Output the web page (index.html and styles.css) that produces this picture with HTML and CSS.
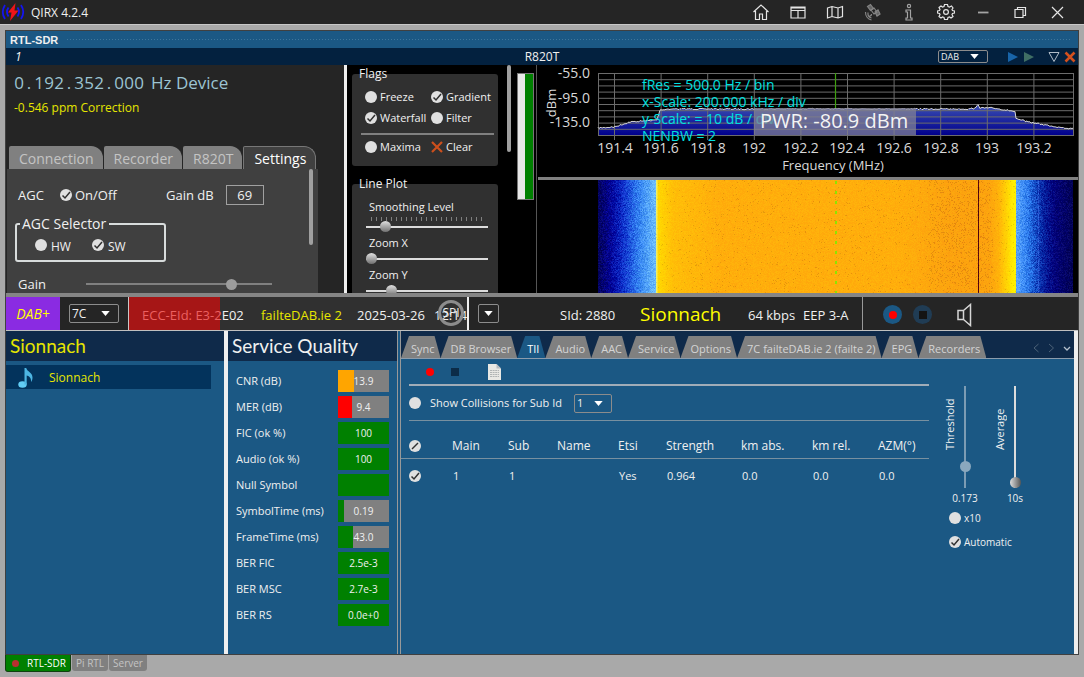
FILE: index.html
```html
<!DOCTYPE html>
<html lang="en">
<head>
<meta charset="utf-8">
<title>QIRX 4.2.4</title>
<link rel="stylesheet" href="styles.css">
</head>
<body>
<header class="titlebar">
  <svg class="logo" width="24" height="18" viewBox="0 0 24 18"><g fill="none" stroke="#1414f0" stroke-width="1.8"><path d="M4 2Q-.5 9 4 16M7.500 4.500Q4.500 9 7.500 13.500M20 2q4.500 7 0 14M16.500 4.500q3 4.500 0 9"/></g><path d="M14.500 0 7 9.500h3.500L9 18l8.500-10.500h-4z" fill="#f01418"/></svg>
  <h1>QIRX 4.2.4</h1>
  <nav class="window-buttons">
    <button aria-label="Home"><svg viewBox="0 0 18 18"><path d="M1.500 9 9 2l7.500 7M3.500 8v8.500h4V11h3v5.500h4V8"/></svg></button>
    <button aria-label="Layout"><svg viewBox="0 0 18 18"><path d="M2 4h14v11H2zM2 7.500h14M9 7.500V15M2 5h14"/></svg></button>
    <button aria-label="Map"><svg viewBox="0 0 18 18"><path d="M1.500 5 6 3.500 12 5l4.500-1.500v10L12 15l-6-1.500L1.500 15zM6 3.500v10M12 5v10"/></svg></button>
    <button class="dim" aria-label="Satellite"><svg viewBox="0 0 18 18"><path d="m4.500 3.500 3-2 3 4-3 2zM12 9l3-2 2 4-3 2z" fill="#666"/><path d="m8 7 3-2 3 4-3 2zM8.500 11a2 2 0 0 1-2 2M5 9.500a5 5 0 0 0 3.500 5.500M2.500 9a8 8 0 0 0 6 8"/></svg></button>
    <button class="soft" aria-label="Information"><svg viewBox="0 0 18 18"><circle cx="9" cy="3" r="1.600"/><path d="M6 7h4.500v8H12v2H6v-2h1.500V9H6z"/></svg></button>
    <button aria-label="Settings"><svg viewBox="0 0 18 18"><path d="M7.500 1.500h3l.5 2 1.500.5 2-1 1.500 2-1 1.500.5 1 2 .5v2l-2 .5-.5 1 1 2-2 1.500-1.500-1-1.500.5-.5 2h-3l-.5-2-1.500-.5-1.500 1-2-1.500 1-2-.5-1-2-.5V8l2-.5.500-1-1-2L4 3l1.500 1L7 3.500z"/><circle cx="9" cy="9" r="2.400"/></svg></button>
    <button class="soft" aria-label="Minimize"><svg viewBox="0 0 18 18"><path d="M4 9.500h10.500" stroke-width="1.800"/></svg></button>
    <button aria-label="Restore"><svg viewBox="0 0 18 18"><path d="M4 6.500h8v8H4zM6.500 6.500v-2h8v8H12"/></svg></button>
    <button aria-label="Close"><svg viewBox="0 0 18 18"><path d="m4 4 11 11M15 4 4 15"/></svg></button>
  </nav>
</header>

<main class="frame">
  <div class="caption"><h2>RTL-SDR</h2><span class="grip"></span></div>
  <div class="device-bar">
    <span class="device-no">1</span><strong>R820T</strong>
    <div class="device-tools">
      <select class="select-small" aria-label="Mode"><option>DAB</option></select>
      <button aria-label="Start"><svg width="14" height="12" viewBox="0 0 14 12"><path d="M2 1l10 5-10 5z" fill="#1864a8"/></svg></button>
      <button aria-label="Play"><svg width="14" height="12" viewBox="0 0 14 12"><path d="M2 1l10 5-10 5z" fill="#3f6e64"/></svg></button>
      <button class="gap-left" aria-label="Menu"><svg width="12" height="12" viewBox="0 0 12 12"><path d="M1 1.500h10L6 10.500z" fill="none" stroke="#b0bcc8"/></svg></button>
      <button aria-label="Close device"><svg width="12" height="12" viewBox="0 0 12 12"><path d="m1.500 1.500 9 9M10.500 1.500l-9 9" stroke="#d2501e" stroke-width="2.600"/></svg></button>
    </div>
  </div>

  <div class="upper">
    <section class="tuner">
      <p class="frequency"><span class="digits"><i>0</i><i>.</i><i>1</i><i>9</i><i>2</i><i>.</i><i>3</i><i>5</i><i>2</i><i>.</i><i>0</i><i>0</i><i>0</i></span><span>Hz Device</span></p>
      <p class="correction">-0.546 ppm Correction</p>
      <div class="tuner-tabs"><button>Connection</button><button>Recorder</button><button>R820T</button><button class="active">Settings</button></div>
      <div class="settings">
        <div class="agc-row"><span class="agc">AGC</span><label class="agc-switch"><input type="checkbox" checked>On/Off</label><label class="gain-db">Gain dB<input type="text" value="69"></label></div>
        <fieldset class="selector"><legend>AGC Selector</legend><label><input type="radio" name="agc">HW</label><label><input type="radio" name="agc" checked>SW</label></fieldset>
        <label class="gain-row">Gain<input type="range" min="0" max="100" value="80"></label>
        <span class="scroll"></span>
      </div>
    </section>

    <section class="controls">
      <div class="groups">
        <fieldset class="group flags"><legend>Flags</legend>
          <div class="flag-grid">
            <label><input type="checkbox">Freeze</label><label><input type="checkbox" checked>Gradient</label>
            <label><input type="checkbox" checked>Waterfall</label><label><input type="checkbox">Filter</label>
          </div>
          <div class="flag-grid last">
            <label><input type="checkbox">Maxima</label>
            <button><svg width="12" height="12" viewBox="0 0 12 12"><path d="m1 1 10 10M11 1 1 11" stroke="#cc4f1c" stroke-width="2.200"/></svg>Clear</button>
          </div>
        </fieldset>
        <fieldset class="group lines"><legend>Line Plot</legend>
          <label for="smooth">Smoothing Level</label><span class="ticks"></span><input id="smooth" type="range" min="0" max="100" value="13">
          <label for="zx">Zoom X</label><input id="zx" type="range" min="0" max="100" value="0">
          <label for="zy">Zoom Y</label><input id="zy" type="range" min="0" max="100" value="18">
        </fieldset>
      </div>
      <span class="scroll"></span>
      <div class="meter"></div>
    </section>

    <section class="plots">
      <svg class="spectrum" viewBox="0 0 540 112">
        <defs><linearGradient id="fill" x1="0" y1="0" x2="0" y2="1"><stop offset="0" stop-color="#3c50b4"/><stop offset="1" stop-color="#00008c"/></linearGradient></defs>
        <path id="area" fill="url(#fill)"/>
        <g id="grid" stroke="#6c6c6c"></g>
        <path id="trace" fill="none" stroke="#d8d8d8"/>
        <path d="M297.500 8v35" stroke="#3fa010" stroke-width="1.200"/>
        <g class="info"><text x="104" y="25">fRes = 500.0 Hz / bin</text><text x="104" y="42">x-Scale: 200.000 kHz / div</text><text x="104" y="59">y-Scale: = 10 dB / div</text><text x="104" y="76">NENBW = 2</text></g>
        <rect x="216" y="43" width="162" height="27" fill="#808094" fill-opacity=".75"/>
        <text class="power" x="222" y="63">PWR: -80.9 dBm</text>
        <g class="axis end"><text x="52" y="13">-55.0</text><text x="52" y="38">-95.0</text><text x="52" y="62">-135.0</text></g>
        <g class="axis mid"><text x="77" y="88">191.4</text><text x="123" y="88">191.6</text><text x="170" y="88">191.8</text><text x="216" y="88">192</text><text x="263" y="88">192.2</text><text x="309" y="88">192.4</text><text x="356" y="88">192.6</text><text x="403" y="88">192.8</text><text x="449" y="88">193</text><text x="496" y="88">193.2</text><text class="axis-title" x="295" y="105">Frequency (MHz)</text><text class="axis-title" transform="translate(18 38) rotate(-90)">dBm</text></g>
      </svg>
      <div class="waterfall"><canvas id="waterfall" width="475" height="113"></canvas></div>
    </section>
  </div>

  <div class="status">
    <strong class="dab">DAB+</strong>
    <div class="channel"><select aria-label="Channel"><option>7C</option></select></div>
    <div class="ensemble"><span class="level"></span><span class="ecc"><b>ECC-EId: E3-2</b>E02</span><span class="name">failteDAB.ie 2</span><span class="date">2025-03-26</span><span class="time">12:14</span><button class="spi">SPI</button></div>
    <div class="service">
      <button class="drop" aria-label="Services"></button><span class="sid">SId: 2880</span><strong>Sionnach</strong><span class="rate">64 kbps</span><span>EEP 3-A</span>
    </div>
    <div class="transport">
      <button class="round" aria-label="Record"><i class="dot"></i></button><button class="round off" aria-label="Stop"><i class="square"></i></button>
      <button class="speaker" aria-label="Sound"><svg width="18" height="24" viewBox="0 0 18 24"><path d="M2 7.500h5.500v9H2zM7.500 7.500l7-6v21l-7-6" fill="none" stroke="#d6d6d6" stroke-width="1.500"/></svg></button>
    </div>
  </div>

  <div class="lower">
    <section class="stations"><h3>Sionnach</h3>
      <button class="station"><svg width="18" height="22" viewBox="0 0 18 22"><ellipse cx="5.500" cy="17.500" rx="4.200" ry="3.300" fill="#62cdf5"/><path d="M7.500 1h1.700c1 4 6.300 4 6.300 9.500 0 2-.7 3.500-1.500 4.500.6-4.500-2.500-6-4.300-6.500v9H7.500z" fill="#4db5e2"/></svg>Sionnach</button>
    </section>
    <section class="quality"><h3>Service Quality</h3>
      <dl>
        <dt>CNR (dB)</dt><dd><i class="amber" style="width:32%"></i><span>13.9</span></dd>
        <dt>MER (dB)</dt><dd><i class="red" style="width:27%"></i><span>9.4</span></dd>
        <dt>FIC (ok %)</dt><dd><i style="width:100%"></i><span>100</span></dd>
        <dt>Audio (ok %)</dt><dd><i style="width:100%"></i><span>100</span></dd>
        <dt>Null Symbol</dt><dd><i style="width:100%"></i></dd>
        <dt>SymbolTime (ms)</dt><dd><i style="width:12%"></i><span>0.19</span></dd>
        <dt>FrameTime (ms)</dt><dd><i style="width:29%"></i><span>43.0</span></dd>
        <dt>BER FIC</dt><dd><i style="width:100%"></i><span>2.5e-3</span></dd>
        <dt>BER MSC</dt><dd><i style="width:100%"></i><span>2.7e-3</span></dd>
        <dt>BER RS</dt><dd><i style="width:100%"></i><span>0.0e+0</span></dd>
      </dl>
    </section>
    <section class="details">
      <div class="detail-tabs"><button>Sync</button><button>DB Browser</button><button class="active">TII</button><button>Audio</button><button>AAC</button><button>Service</button><button>Options</button><button>7C failteDAB.ie 2 (failte 2)</button><button>EPG</button><button>Recorders</button>
        <svg class="arrows" width="38" height="12" viewBox="0 0 38 12" fill="none"><path d="M5.500 2 1 6l4.500 4M16 2l4.500 4-4.500 4" stroke="#4c6278"/><path d="m31 5 3 3 3-3" stroke="#b4c0cc" stroke-width="1.300"/></svg>
      </div>
      <div class="tii">
        <div class="tii-main">
          <div class="tools"><button aria-label="Record TII"><i class="dot"></i></button><button aria-label="Stop TII"><i class="square"></i></button><button class="page" aria-label="Log"><svg width="13" height="16" viewBox="0 0 13 16"><path d="M0 0h8.500L13 4.500V16H0z" fill="#e8e8e4"/><path d="M8.500 0v4.500H13z" fill="#b8bcc0"/><path d="M2 6.500h9M2 8.500h9M2 10.500h9M2 12.500h9" stroke="#b0b4b4" stroke-dasharray="2 .6"/></svg></button></div>
          <div class="collisions"><label><input type="checkbox">Show Collisions for Sub Id</label><select aria-label="Sub Id"><option>1</option></select></div>
          <table>
            <colgroup><col class="c1"><col class="c2"><col class="c3"><col class="c4"><col class="c5"><col class="c6"><col class="c7"><col class="c8"><col></colgroup>
            <thead><tr><th><input type="checkbox" class="partial" aria-label="All rows"></th><th>Main</th><th>Sub</th><th>Name</th><th>Etsi</th><th>Strength</th><th>km abs.</th><th>km rel.</th><th>AZM(°)</th></tr></thead>
            <tbody><tr><td><input type="checkbox" checked aria-label="Row 1"></td><td>1</td><td>1</td><td></td><td>Yes</td><td>0.964</td><td>0.0</td><td>0.0</td><td>0.0</td></tr></tbody>
          </table>
        </div>
        <div class="tii-side">
          <div class="sliders">
            <label for="thr">Threshold</label><div class="slider muted"><input id="thr" type="range" min="0" max="100" value="18" disabled><output>0.173</output></div>
            <label for="avg">Average</label><div class="slider"><input id="avg" type="range" min="0" max="100" value="0"><output>10s</output></div>
          </div>
          <label class="check"><input type="checkbox">x10</label>
          <label class="check"><input type="checkbox" checked>Automatic</label>
        </div>
      </div>
    </section>
  </div>
</main>
<footer class="devices"><button class="active"><i class="dot"></i>RTL-SDR</button><button>Pi RTL</button><button>Server</button></footer>
<script src="plots.js"></script>
</body>
</html>
```
FILE: styles.css
```css
* { box-sizing: border-box; }
body { margin: 0; min-height: 100vh; display: flex; flex-direction: column; background: #a9a9a9; color: #f0f0f0; font: 12px/16px "Open Sans", "Noto Sans", sans-serif; }
h1, h2, h3, p, dl, dd, fieldset { margin: 0; padding: 0; border: 0; font-weight: 400; }
button, input, select { font: inherit; color: inherit; margin: 0; }
button { padding: 0; border: 0; background: none; white-space: nowrap; }
i { font-style: normal; }
fieldset { min-width: 0; }
label { white-space: nowrap; }

input[type=checkbox], input[type=radio] { appearance: none; flex: none; width: 12px; height: 12px; border-radius: 50%; background: #e0e0e0 center / 12px 12px no-repeat; }
input:checked { background-image: url("data:image/svg+xml,%3Csvg xmlns='http://www.w3.org/2000/svg' viewBox='0 0 12 12'%3E%3Cpath d='M2.500 6.500l2.500 2.500 5-6' fill='none' stroke='%23303030' stroke-width='1.500'/%3E%3C/svg%3E") !important; }
input.partial { background-image: url("data:image/svg+xml,%3Csvg xmlns='http://www.w3.org/2000/svg' viewBox='0 0 12 12'%3E%3Cpath d='M3 9l6-6' stroke='%23303030' stroke-width='1.500'/%3E%3C/svg%3E") !important; }
input[type=range] { appearance: none; display: block; width: 100%; height: 12px; background: linear-gradient(#dcdcdc, #dcdcdc) center / 100% 2px no-repeat; }
input[type=range]::-webkit-slider-thumb { appearance: none; width: 11px; height: 11px; border-radius: 50%; background: linear-gradient(#e0e0e0, #707070); }
select { appearance: none; width: 50px; height: 19px; padding: 0 2px; border: 1px solid #8c8c8c; border-radius: 2px; background: url("data:image/svg+xml,%3Csvg xmlns='http://www.w3.org/2000/svg' viewBox='0 0 10 6'%3E%3Cpath d='M0 0h10L5 6z' fill='white'/%3E%3C/svg%3E") right 8px center / 9px 5px no-repeat; }
.dot { display: block; width: 8px; height: 8px; border-radius: 50%; background: #f00; }
.square { display: block; width: 8px; height: 8px; background: #0c2c48; }
.scroll { width: 4px; border-radius: 2px; background: #a0a0a0; }

.titlebar { display: flex; align-items: center; height: 25px; flex: none; padding-right: 9px; background: #252525; border-bottom: 1px solid #c8c8c8; }
.logo { margin-left: 1px; }
h1 { flex: 1; margin-left: 6px; padding-top: 2px; font-size: 12px; }
.window-buttons { display: flex; }
.window-buttons button { width: 37px; height: 18px; }
.window-buttons svg { width: 18px; height: 18px; fill: none; stroke: #e4e4e4; stroke-width: 1.200; }
.window-buttons .dim svg, .window-buttons .soft svg { stroke: #858585; }
.window-buttons .soft svg { stroke: #a4a4a4; }

.frame { flex: 1; display: flex; flex-direction: column; margin: 5px 5px 0; border: 1px solid #404040; }
.caption { display: flex; align-items: center; height: 17px; padding: 0 8px 0 4px; background: #1b5884; }
h2 { font: bold 11px/16px "Liberation Sans", Arial, sans-serif; }
.grip { flex: 1; height: 4px; margin-left: 8px; background: radial-gradient(circle, #5688aa 0 1px, transparent 1px) 0 0 / 3px 3px; opacity: .6; }
.device-bar { display: grid; grid-template-columns: 1fr auto 1fr; align-items: center; height: 17px; padding: 0 2px; background: #03213f; }
.device-no { padding-left: 7px; font-style: italic; }
.device-bar strong { font-weight: 400; }
.device-tools { display: flex; justify-content: flex-end; align-items: center; }
.device-tools button, .device-tools svg { display: block; }
.device-tools select { height: 13px; margin-right: 16px; font-size: 9px; line-height: 11px; }
.device-tools button { margin-left: 2px; }
.device-tools .gap-left { margin-left: 12px; margin-right: 2px; }

.upper { flex: 229 1 0; min-height: 228px; display: flex; background: #000; border-bottom: 4px solid #858585; overflow: hidden; max-height: 232px; }
.tuner { flex: 0 1 341px; display: flex; flex-direction: column; background: #252525; border-right: 3px solid #efefef; overflow: hidden; }
.frequency { display: flex; gap: 7px; padding: 7px 0 0 8px; font-size: 17px; line-height: 22px; color: #9cc4d2; }
.digits i { display: inline-block; width: 10px; text-align: center; }
.correction { margin: 6px 8px 30px; color: #e6e600; line-height: 16px; }
.tuner-tabs { display: flex; gap: 1px; margin-left: 3px; font-size: 14px; }
.tuner-tabs button { height: 23px; padding: 3px 9px 0 10px; background: #808080; color: #c4c4c4; border-radius: 2px 12px 0 0; }
.tuner-tabs .active { background: #404040; color: #fff; border: 1px solid #777; border-bottom: 0; padding-top: 2px; }
.settings { position: relative; width: 311px; flex: 1; padding: 16px 8px 0; background: #404040; margin-left: 1px; }
.settings .scroll { position: absolute; right: 5px; top: 0; height: 76px; }
.agc-row { display: flex; align-items: center; height: 20px; padding-left: 3px; font-size: 13px; }
.agc { width: 42px; }
.agc-switch { display: flex; align-items: center; gap: 3px; width: 106px; }
.gain-db { display: flex; align-items: center; gap: 12px; }
.gain-db input { width: 38px; height: 20px; border: 1px solid #a0a0a0; background: none; text-align: center; }
.selector { display: flex; align-items: center; gap: 21px; width: 151px; height: 48px; margin-top: 9px; padding: 0 0 0 18px; border: 2px solid #d8dcdc; border-radius: 3px; }
.selector legend { margin-left: -15px; padding: 0 3px 0 2px; font-size: 14px; line-height: 20px; }
.selector label { display: flex; align-items: flex-start; gap: 4px; line-height: 16px; }
.gain-row { display: flex; align-items: center; gap: 40px; margin-top: 12px; padding-left: 3px; font-size: 13px; line-height: 20px; }
.gain-row input { width: 186px; background-image: linear-gradient(#808080, #808080); }
.gain-row input::-webkit-slider-thumb { background: #9c9c9c; }

.controls { flex: none; display: flex; width: 190px; padding-left: 5px; border-right: 1px solid #555; font-size: 11px; }
.groups { width: 146px; }
.controls > .scroll { height: 87px; margin-left: 9px; }
.meter { width: 17px; height: 127px; margin: 8px 0 0 6px; background: linear-gradient(90deg, #e8e8e8 50%, #008000 50%); border: 1px solid #777; }
.group { margin-top: 1px; padding: 0 4px 11px 9px; background: #303030; border-radius: 3px; }
.group legend { padding: 0; margin-left: -2px; font-size: 12px; line-height: 16px; }
.flag-grid { display: grid; grid-template-columns: 66px 1fr; row-gap: 5px; margin-top: 7px; padding: 0 0 7px 4px; border-bottom: 2px solid #808080; }
.flag-grid label, .flag-grid button { display: flex; align-items: center; gap: 3px; }
.flag-grid.last { margin-top: 4px; padding-bottom: 0; border: 0; }
.lines { display: flex; flex-direction: column; margin-top: 10px; padding: 0 10px 0 14px; }
.lines legend { margin-left: -7px; }
.lines label { margin: 3px 0 2px 3px; }
.lines label:first-of-type { margin: 7px 0 2px 3px; }
.lines input { height: 11px; }
.ticks { height: 4px; margin: 0 4px 0 5px; background: repeating-linear-gradient(90deg, #808080 0 1px, transparent 1px 5px); }

.plots { flex: 1; min-width: 0; display: flex; flex-direction: column; padding-left: 1px; }
.spectrum { display: block; width: 100%; flex: none; border-bottom: 3px solid #808080; height: 115px; }
.spectrum text { font-family: "Open Sans", "Noto Sans", sans-serif; }
.info { fill: #00e0e0; font-size: 14px; }
.power { fill: #f4f4f4; font-size: 20px; }
.axis { fill: #d8d8d8; font-size: 14px; }
.axis-title { font-size: 13px; }
.end { text-anchor: end; }
.mid { text-anchor: middle; }
.waterfall { flex: 1; min-height: 0; padding: 0 5px 0 60px; }
.waterfall canvas { display: block; width: 100%; height: 100%; }

.status { display: flex; height: 34px; flex: none; background: #252525; border-bottom: 1px solid #c0c0c0; font-size: 13px; }
.dab { display: grid; place-items: center; width: 54px; background: #8a2be2; color: #ff0; font-style: italic; font-weight: 400; font-size: 14px; }
.channel { display: flex; align-items: center; justify-content: center; width: 69px; border-right: 1px solid #c8c8c8; }
.channel select { font-size: 12px; }
.ensemble { position: relative; display: flex; align-items: center; width: 340px; padding: 2px 0 0 13px; background: #303030; border-right: 2px solid #eee; overflow: hidden; white-space: nowrap; }
.level { position: absolute; inset: 0 auto 0 0; width: 91px; background: #a61616; }
.ecc { position: relative; flex: none; width: 119px; }
.ecc b { font-weight: 400; color: #ec6060; }
.name { flex: none; width: 96px; color: #e6e600; }
.date { flex: none; width: 77px; }
.spi { position: absolute; left: 309px; top: 3px; width: 26px; height: 26px; border: 3px solid #8c8c8c; border-radius: 50%; color: #eee; font-size: 12px; line-height: 20px; }
.service { flex: 1; display: flex; align-items: center; min-width: 390px; padding-left: 9px; border-right: 1px solid #999; white-space: nowrap; }
.service > span { padding-top: 3px; }
.drop { width: 21px; height: 19px; margin-right: 61px; border: 1px solid #8c8c8c; border-radius: 2px; background: url("data:image/svg+xml,%3Csvg xmlns='http://www.w3.org/2000/svg' viewBox='0 0 10 6'%3E%3Cpath d='M0 0h10L5 6z' fill='white'/%3E%3C/svg%3E") center / 9px 5px no-repeat; }
.sid { width: 80px; }
.service strong { width: 108px; font-size: 19px; line-height: 24px; font-weight: 400; color: #ff0; }
.rate { width: 55px; }
.transport { display: flex; align-items: center; gap: 11px; width: 215px; padding: 2px 0 0 20px; }
.round { display: grid; place-items: center; width: 19px; height: 19px; border-radius: 50%; background: #1b5884; }
.off { background: #203c54; }
.off .square { background: #141414; }
.speaker { margin-left: 13px; height: 24px; }

.lower { flex: 324 1 0; display: flex; background: #1b5884; border-right: 4px solid #efefef; }
h3 { height: 30px; padding-left: 4px; background: #0f2a4a; font: 19px/30px Lato, "Open Sans", sans-serif; }
.stations { flex: 0 1 222px; border-right: 4px solid #efefef; }
.stations h3 { color: #e6e600; }
.station { display: flex; align-items: center; gap: 14px; width: calc(100% - 13px); height: 24px; margin-top: 4px; padding: 2px 0 0 11px; background: #03335c; color: #e6e600; font-size: 12px; }
.quality { flex: none; width: 173px; border-right: 4px double #999; }
.quality dl { display: grid; grid-template-columns: 1fr 51px; gap: 4px 0; padding: 9px 8px 0; font-size: 11px; line-height: 22px; }
.quality dd { position: relative; background: #808080; text-align: center; font-size: 10px; }
.quality dd i { position: absolute; inset: 0 auto 0 0; background: #008000; }
.quality dd span { position: relative; }
.quality dd .amber { background: #ffa500; }
.quality dd .red { background: #f00; }
.details { flex: 1; min-width: 0; display: flex; flex-direction: column; }
.detail-tabs { display: flex; align-items: flex-end; height: 28px; padding-right: 3px; background: #0f2a4a; border-bottom: 1px solid #8c9cac; }
.detail-tabs button { height: 22px; padding: 4px 6px 0 10px; background: #808080; color: #d4d4d4; font-size: 11px; line-height: 18px; clip-path: polygon(8px 0, calc(100% - 6px) 0, 100% 100%, 0 100%); }
.detail-tabs .active { background: #1b5884; color: #fff; }
.arrows { flex: none; margin: 0 0 4px auto; }
.tii { flex: 1; display: flex; }
.tii-main { flex: 1; min-width: 0; }
.tools { display: flex; align-items: center; gap: 17px; height: 27px; margin-left: 8px; padding-left: 17px; border-bottom: 2px solid #a0acb8; }
.tools .page { height: 16px; margin-left: 12px; }
.collisions { display: flex; align-items: center; gap: 12px; height: 35px; margin-left: 8px; border-bottom: 1px solid #7890a0; font-size: 11px; }
.collisions label { display: flex; align-items: center; gap: 9px; }
.collisions select { width: 38px; }
table { width: 100%; table-layout: fixed; border-collapse: collapse; text-align: left; }
th, td { height: 37px; padding: 14px 0 0; font-weight: 400; font-size: 12px; border-bottom: 1px solid #7890a0; }
td { height: 35px; padding: 0 0 0 1px; border: 0; font-size: 11px; }
th:first-child, td:first-child { padding-left: 8px; }
th input, td input { display: block; }
.c1 { width: 51px; } .c2 { width: 56px; } .c3 { width: 49px; } .c4 { width: 61px; } .c5 { width: 48px; } .c6 { width: 75px; } .c7 { width: 71px; } .c8 { width: 66px; }
.tii-side { flex: none; width: 145px; padding: 27px 0 0 14px; font-size: 10px; }
.sliders { display: flex; height: 124px; }
.sliders > label { width: 14px; height: 64px; writing-mode: vertical-rl; transform: rotate(180deg); font-size: 11px; line-height: 14px; }
.slider { display: flex; flex-direction: column; align-items: center; width: 36px; margin-left: -10px; margin-right: 10px; }
.slider input { writing-mode: vertical-lr; direction: rtl; width: 12px; height: 102px; margin: 0 0 2px; background-size: 2px 100%; }
.slider input::-webkit-slider-thumb { background: linear-gradient(90deg, #ddd, #555); }
.muted input { background-image: linear-gradient(#7c9cb4, #7c9cb4); }
.muted input::-webkit-slider-thumb { background: #8aa8be; }
.check { display: flex; align-items: center; gap: 3px; margin: 0 0 8px 6px; }

.devices { display: flex; align-items: flex-start; gap: 1px; height: 22px; flex: none; padding-left: 5px; font-size: 10px; }
.devices button { display: flex; align-items: center; height: 16px; padding: 0 4px; background: #808080; color: #c4c4c4; border-radius: 0 0 3px 3px; }
.devices .active { gap: 8px; height: 17px; padding: 0 4px 0 6px; background: #008000; color: #fff; border: 1px solid #104010; border-top: 0; }
.devices .dot { width: 7px; height: 7px; background: #b83030; }
```
FILE: plots.js
```js
let seed = 7;
const rnd = () => (seed = (seed * 16807) % 2147483647) / 2147483647;

// Interpolates linearly through [x, value...] stops.
function sample(stops, x) {
  for (let i = 1; i < stops.length; i++) {
    const a = stops[i - 1], b = stops[i];
    if (x <= b[0]) return a.slice(1).map((v, k) => v + (b[k + 1] - v) * (x - a[0]) / (b[0] - a[0]));
  }
  return stops[stops.length - 1].slice(1);
}

const level = [[60, 63], [76, 62], [92, 57], [119, 55], [122, 45], [130, 44], [430, 44], [438, 43], [440, 39], [442, 43], [455, 43], [474, 46], [477, 47], [478, 54], [496, 58], [520, 62], [535, 64]];
let line = "";
for (let x = 60; x <= 535; x++) line += (x > 60 ? "L" : "M") + x + " " + (sample(level, x)[0] + (rnd() - 0.5) * 1.4).toFixed(1);
document.getElementById("trace").setAttribute("d", line);
document.getElementById("area").setAttribute("d", line + "V70H60Z");

let grid = "";
for (let i = 0; i <= 10; i++) grid += `<path d="M60 ${8.5 + i * 6.2}H536"/>`;
for (let i = 0; i < 10; i++) grid += `<path d="M${76.5 + i * 46.6} 8v67"/>`;
document.getElementById("grid").innerHTML = grid + '<path d="M60.500 8v62M535.500 8v62"/>';

const colors = [[0, 0, 0, 90], [12, 0, 0, 150], [25, 15, 50, 205], [40, 50, 130, 240], [57, 110, 190, 255], [58, 240, 240, 100], [60, 255, 215, 0], [75, 255, 190, 8], [120, 255, 174, 12], [300, 255, 174, 12], [350, 252, 163, 14], [390, 252, 163, 14], [400, 255, 178, 10], [414, 255, 235, 0], [417, 255, 240, 0], [418, 90, 165, 255], [430, 40, 120, 235], [442, 8, 45, 170], [455, 0, 0, 125], [475, 0, 0, 85]];
const canvas = document.getElementById("waterfall");
const ctx = canvas.getContext("2d");
const img = ctx.createImageData(475, 113);
for (let y = 0; y < 113; y++) for (let x = 0; x < 475; x++) {
  const blue = x < 58 || x > 417;
  const shifted = x + (rnd() - 0.5) * 10;
  const at = !blue ? x : x < 58 ? Math.max(0, Math.min(57, shifted)) : Math.max(418, Math.min(475, shifted));
  const c = sample(colors, at);
  const d = (rnd() - 0.5) * (blue ? 30 : 14);
  let dark = 0;
  if (!blue && rnd() < (x > 330 && x < 395 ? 0.14 : 0.03)) dark = 24;
  if (x === 380) dark = 150 + rnd() * 40;
  if (x === 440) dark = -22;
  const o = (y * 475 + x) * 4;
  img.data[o] = c[0] + (blue ? d : 0) - dark;
  img.data[o + 1] = c[1] + d - dark;
  img.data[o + 2] = c[2] + (blue ? d : 0) - (dark < 0 ? dark : 0);
  img.data[o + 3] = 255;
}
ctx.putImageData(img, 0, 0);
ctx.fillStyle = "#8ce600";
for (let y = 1; y < 113; y += 10) ctx.fillRect(237, y, 2, 3);
```
